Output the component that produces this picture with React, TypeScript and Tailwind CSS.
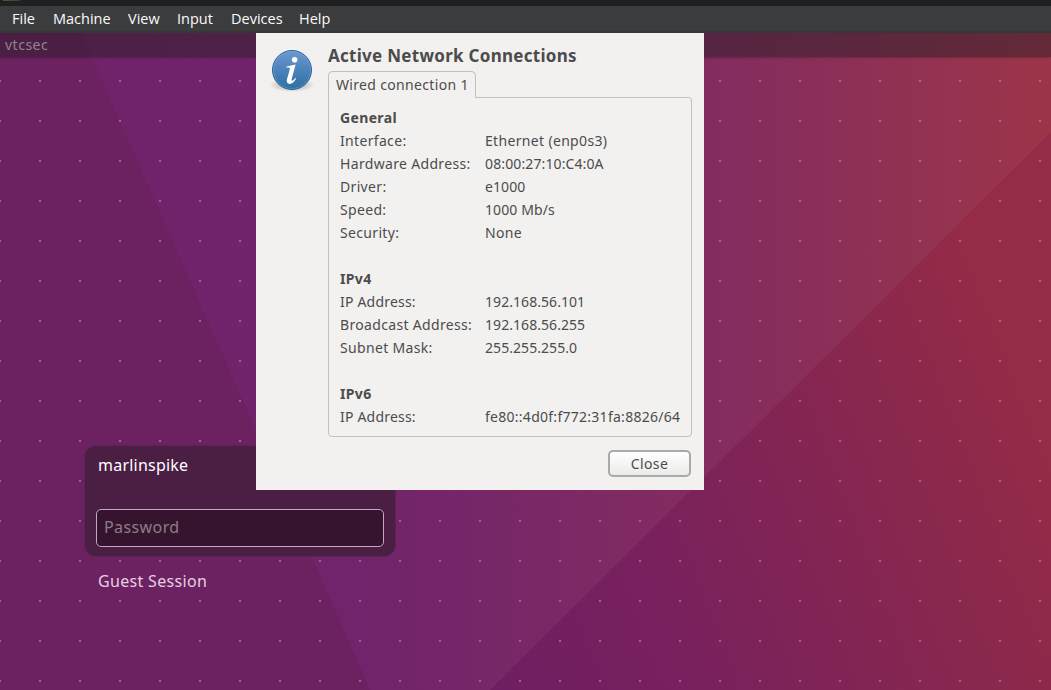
const menu = [
  { t: "File", c: "w-[41px]" },
  { t: "Machine", c: "w-[75px]" },
  { t: "View", c: "w-[49px]" },
  { t: "Input", c: "w-[54px]" },
  { t: "Devices", c: "w-[68px]" },
  { t: "Help", c: "w-[40px]" },
];

type Row = { label: string; value: string; fit: string };

const sections: { title: string; rows: Row[] }[] = [
  {
    title: "General",
    rows: [
      { label: "Interface:", value: "Ethernet (enp0s3)", fit: "tracking-[0.33px]" },
      { label: "Hardware Address:", value: "08:00:27:10:C4:0A", fit: "tracking-[0.12px]" },
      { label: "Driver:", value: "e1000", fit: "tracking-[0.1px]" },
      { label: "Speed:", value: "1000 Mb/s", fit: "tracking-[0.1px]" },
      { label: "Security:", value: "None", fit: "tracking-[0.35px]" },
    ],
  },
  {
    title: "IPv4",
    rows: [
      { label: "IP Address:", value: "192.168.56.101", fit: "tracking-[0.06px]" },
      { label: "Broadcast Address:", value: "192.168.56.255", fit: "tracking-[0.06px]" },
      { label: "Subnet Mask:", value: "255.255.255.0", fit: "tracking-[0.06px]" },
    ],
  },
  {
    title: "IPv6",
    rows: [{ label: "IP Address:", value: "fe80::4d0f:f772:31fa:8826/64", fit: "tracking-[0.27px]" }],
  },
];

function Wallpaper() {
  return (
    <svg className="absolute inset-0" width="1051" height="657" viewBox="0 33 1051 657">
      <defs>
        <linearGradient id="upper" gradientUnits="userSpaceOnUse" x1="100" y1="0" x2="1051" y2="0">
          <stop offset="0" stopColor="#70236a" />
          <stop offset="0.28" stopColor="#71246b" />
          <stop offset="0.64" stopColor="#832c60" />
          <stop offset="0.83" stopColor="#903154" />
          <stop offset="1" stopColor="#9d3549" />
        </linearGradient>
        <linearGradient id="lower" gradientUnits="userSpaceOnUse" x1="480" y1="690" x2="1051" y2="470">
          <stop offset="0" stopColor="#6e1e62" />
          <stop offset="0.35" stopColor="#79215d" />
          <stop offset="0.7" stopColor="#862650" />
          <stop offset="1" stopColor="#942b47" />
        </linearGradient>
        <pattern id="dots" patternUnits="userSpaceOnUse" x="39" y="0" width="40" height="40">
          <rect width="2" height="2" fill="#d884bd" fillOpacity="0.55" />
        </pattern>
      </defs>
      <rect y="33" width="1051" height="657" fill="url(#upper)" />
      <path d="M1051 132L1051 690H490Z" fill="url(#lower)" />
      <path d="M0 33H81L370 690H0Z" fill="#6c2161" />
      <rect y="60" width="1051" height="630" fill="url(#dots)" />
    </svg>
  );
}

function InfoIcon() {
  return (
    <svg className="mt-px" width="48" height="48" viewBox="0 0 48 48">
      <defs>
        <linearGradient id="disc" x1="0" y1="0" x2="0" y2="1">
          <stop offset="0" stopColor="#6d99cf" />
          <stop offset="0.5" stopColor="#4a83bb" />
          <stop offset="1" stopColor="#2d6f9f" />
        </linearGradient>
        <radialGradient id="shade">
          <stop offset="0.5" stopColor="#000" stopOpacity="0.18" />
          <stop offset="1" stopColor="#000" stopOpacity="0" />
        </radialGradient>
      </defs>
      <ellipse cx="24" cy="38" rx="23" ry="7" fill="url(#shade)" />
      <circle cx="24" cy="23" r="19.5" fill="url(#disc)" stroke="#2c639b" />
      <circle cx="24" cy="23" r="18.5" fill="none" stroke="#8fb5dd" strokeOpacity="0.35" />
      <circle cx="26.6" cy="12.7" r="2.8" fill="#fff" />
      <path d="M18.6 19.4L27.6 17.6L23.8 31.6Q23.2 34.2 24.4 33.8Q25.5 33.4 27.2 30.9L28.2 31.6Q25.2 36.8 21.6 36.9Q18 36.6 18.9 32.6L21.7 22.8Q22.3 20.6 21 20.5L18.4 20.5Z" fill="#fff" />
    </svg>
  );
}

export default function App() {
  return (
    <div className="flex h-[690px] w-[1051px] flex-col overflow-hidden bg-[#6c2161] font-['Noto_Sans',sans-serif]">
      <header className="flex h-[33px] shrink-0 flex-col bg-[#3b3c3e]">
        <div className="h-[6px] bg-[#1e2022] pl-[3px]">
          <div className="h-px w-[17px] bg-linear-to-r from-[#5b5634] to-[#3b3c3e]" />
        </div>
        <nav className="flex h-[27px] items-center border-b-2 border-[#37373a] pl-3 font-['Open_Sans',sans-serif] text-[14.5px] text-[#fafafa]">
          {menu.map((m) => (
            <span key={m.t} className={`${m.c} shrink-0 whitespace-nowrap`}>{m.t}</span>
          ))}
        </nav>
      </header>
      <main className="relative h-[657px]">
        <Wallpaper />
        <div className="relative h-6 bg-[#2a1d26]/50 pl-[5px] text-[14px] leading-6 tracking-[0.5px] text-[#8f868c] shadow-[0_1px_2px_rgba(0,0,0,0.22)]">
          vtcsec
        </div>
        <div className="relative mt-[388px] ml-[84px] w-[312px]">
          <section className="h-[112px] rounded-[12px] border border-[#5a2453] bg-[#4b1e44] px-[11px] pt-[7px]">
            <p className="pl-[2px] text-[16px] leading-6 tracking-[0.22px] text-white">marlinspike</p>
            <div className="mt-[32px] h-[38px] w-[288px] rounded-[5px] border border-[#c3a9bf] bg-[#36142f] pl-[7px] text-[16px] leading-[34px] tracking-[0.4px] text-[#8c7d86]">
              Password
            </div>
          </section>
          <p className="mt-[12px] pl-[14px] text-[16px] leading-6 tracking-[0.32px] text-[#e6cfe2]">Guest Session</p>
        </div>
        <section className="absolute top-0 left-[256px] flex h-[457px] w-[448px] bg-[#f2f1ef] pt-[13px] pl-3 text-[14px] text-[#4c4c4c]">
          <InfoIcon />
          <div className="ml-3 w-[364px]">
            <h1 className="-mt-[2px] h-[27px] text-[17px] leading-6 font-bold tracking-[0.28px] whitespace-nowrap">Active Network Connections</h1>
            <div className="relative z-10 h-[27px] w-[148px] rounded-t-[5px] border border-b-0 border-[#bfbfbc] bg-[#f2f1ef] pl-[7px] leading-[26px] tracking-[0.33px] whitespace-nowrap">
              Wired connection 1
            </div>
            <div className="-mt-px h-[340px] rounded-b-[4px] rounded-tr-[3px] border border-[#c2c1be] pt-[8px] pl-[11px]">
              {sections.map((s) => (
                <div key={s.title} className="mb-[23px] leading-[23px] whitespace-nowrap">
                  <h2 className="font-bold tracking-[0.35px]">{s.title}</h2>
                  {s.rows.map((r) => (
                    <div key={r.label} className="grid grid-cols-[145px_1fr]">
                      <span className={r.label === "IP Address:" ? "tracking-[0.2px]" : "tracking-[0.33px]"}>{r.label}</span>
                      <span className={r.fit}>{r.value}</span>
                    </div>
                  ))}
                </div>
              ))}
            </div>
            <button className="mt-[13px] mr-px ml-auto block h-[27px] w-[83px] rounded-[5px] border-2 border-[#aaa9a7] bg-linear-to-b from-white to-[#ebebea] leading-[23px] tracking-[0.35px]">
              Close
            </button>
          </div>
        </section>
      </main>
    </div>
  );
}
